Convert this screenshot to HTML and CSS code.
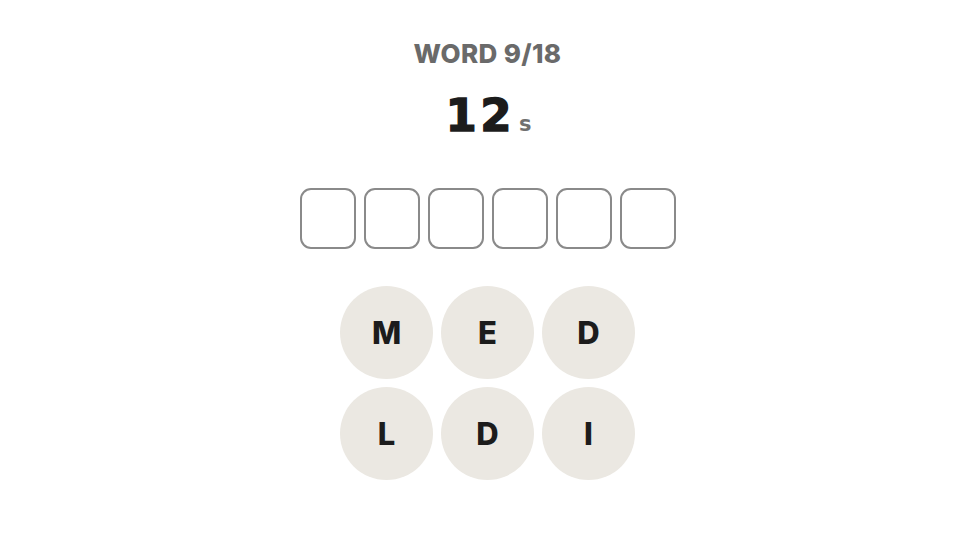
FILE: index.html
```html
<!DOCTYPE html>
<html>
<head>
<meta charset="utf-8">
<link rel="stylesheet" href="styles.css">
</head>
<body>
<main class="game">
  <div class="counter">WORD 9/18</div>
  <div class="timer"><span class="time">12</span><span class="unit">s</span></div>
  <div class="slots">
    <div class="slot"></div>
    <div class="slot"></div>
    <div class="slot"></div>
    <div class="slot"></div>
    <div class="slot"></div>
    <div class="slot"></div>
  </div>
  <div class="tiles">
    <div class="tile">M</div>
    <div class="tile">E</div>
    <div class="tile">D</div>
    <div class="tile">L</div>
    <div class="tile">D</div>
    <div class="tile">I</div>
  </div>
</main>
</body>
</html>
```
FILE: styles.css
```css
html, body {
  margin: 0;
  padding: 0;
  background: #ffffff;
}
.game {
  width: 960px;
  height: 540px;
  box-sizing: border-box;
  padding: 38px 0 0 15px;
  display: flex;
  flex-direction: column;
  align-items: center;
  font-family: Inter, Lato, "Noto Sans", sans-serif;
}
.counter {
  font-size: 26px;
  line-height: 32px;
  font-weight: 800;
  color: #6a6a6a;
  letter-spacing: 0.35px;
}
.timer {
  margin-top: 20px;
  display: flex;
  align-items: baseline;
  line-height: 52px;
  font-family: "DejaVu Sans", Inter, sans-serif;
  font-weight: 700;
  padding-left: 2px;
}
.time {
  font-size: 45px;
  color: #1c1c1c;
  letter-spacing: 3.5px;
  -webkit-text-stroke: 1.4px #1c1c1c;
}
.unit {
  font-size: 21px;
  color: #707070;
  margin-left: 4px;
}
.slots {
  margin-top: 38px;
  display: flex;
  gap: 8px;
}
.slot {
  width: 56px;
  height: 61px;
  box-sizing: border-box;
  border: 2.5px solid #8a8a8a;
  border-radius: 11px;
}
.tiles {
  margin-top: 37px;
  display: grid;
  grid-template-columns: repeat(3, 93px);
  gap: 8px;
}
.tile {
  width: 93px;
  height: 93px;
  border-radius: 50%;
  background: #ebe8e2;
  display: flex;
  align-items: center;
  justify-content: center;
  font-size: 31px;
  font-weight: 800;
  color: #1c1c1c;
}
```
